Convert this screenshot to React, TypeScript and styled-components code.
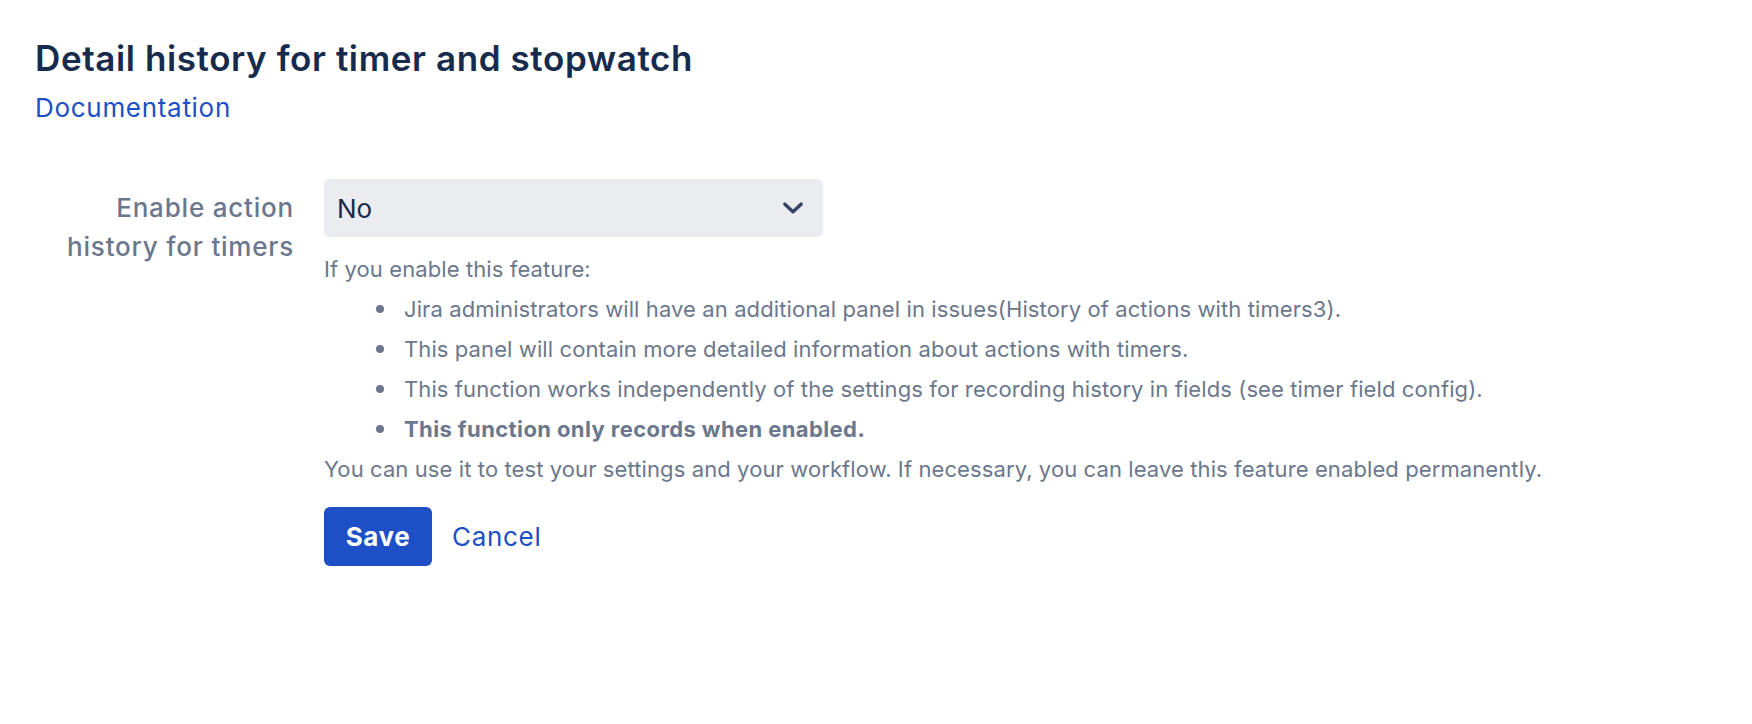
import styled, { createGlobalStyle } from 'styled-components';

const GlobalStyle = createGlobalStyle`
  body {
    margin: 0;
    background: #ffffff;
    font-family: Inter, "Noto Sans", "Liberation Sans", sans-serif;
  }
`;

const helpItems = [
  { text: 'Jira administrators will have an additional panel in issues(History of actions with timers3).' },
  { text: 'This panel will contain more detailed information about actions with timers.' },
  { text: 'This function works independently of the settings for recording history in fields (see timer field config).' },
  { text: 'This function only records when enabled.', bold: true },
];

function ChevronDown() {
  return (
    <svg width="26" height="26" viewBox="0 0 24 24" fill="none">
      <path d="M4.5 8.5 12 15.5l7.5-7" stroke="#344563" strokeWidth="3.2" strokeLinecap="round" strokeLinejoin="round" />
    </svg>
  );
}

export default function App() {
  return (
    <>
      <GlobalStyle />
      <Page>
        <Title>Detail history for timer and stopwatch</Title>
        <DocLink href="#">Documentation</DocLink>

        <Form>
          <Label>
            Enable action
            <br />
            history for timers
          </Label>
          <Field>
            <Select>
              <SelectValue>No</SelectValue>
              <ChevronDown />
            </Select>
            <Help>If you enable this feature:</Help>
            <HelpList>
              {helpItems.map((item) => (
                <HelpItem key={item.text} $bold={item.bold}>
                  <Bullet />
                  {item.text}
                </HelpItem>
              ))}
            </HelpList>
            <Help>
              You can use it to test your settings and your workflow. If necessary, you can leave this feature enabled
              permanently.
            </Help>
            <Actions>
              <SaveButton>Save</SaveButton>
              <CancelLink href="#">Cancel</CancelLink>
            </Actions>
          </Field>
        </Form>
      </Page>
    </>
  );
}

const Page = styled.div`
  padding: 38px 35px;
  color: #172b4d;
`;

const Title = styled.h1`
  margin: 0;
  font-size: 35px;
  line-height: 40px;
  font-weight: 600;
  letter-spacing: 0.6px;
  color: #172b4d;
`;

const DocLink = styled.a`
  display: inline-block;
  margin-top: 15px;
  font-size: 26px;
  line-height: 30px;
  letter-spacing: 0.7px;
  color: #1d4fc6;
  text-decoration: none;
`;

const Form = styled.div`
  display: grid;
  grid-template-columns: 259px 1fr;
  column-gap: 30px;
  margin-top: 56px;
`;

const Label = styled.div`
  padding-top: 9px;
  text-align: right;
  font-size: 26px;
  line-height: 39px;
  letter-spacing: 0.8px;
  font-weight: 500;
  color: #6b778c;
`;

const Field = styled.div`
  display: flex;
  flex-direction: column;
  align-items: flex-start;
`;

const Select = styled.div`
  display: flex;
  align-items: center;
  justify-content: space-between;
  box-sizing: border-box;
  width: 499px;
  height: 58px;
  padding: 0 17px 0 13px;
  background: #ebecf0;
  border-radius: 6px;
`;

const SelectValue = styled.span`
  font-size: 26px;
  color: #172b4d;
`;

const Help = styled.p`
  margin: 0;
  font-size: 22px;
  line-height: 40px;
  letter-spacing: 0.1px;
  color: #6b778c;

  &:first-of-type {
    margin-top: 12px;
  }
`;

const HelpList = styled.ul`
  margin: 0;
  padding: 0 0 0 52px;
  list-style: none;
`;

const HelpItem = styled.li<{ $bold?: boolean }>`
  display: flex;
  align-items: center;
  gap: 20px;
  font-size: 22px;
  line-height: 40px;
  color: #6b778c;
  font-weight: ${(p) => (p.$bold ? 700 : 400)};
  letter-spacing: ${(p) => (p.$bold ? '0.4px' : '0.1px')};
`;

const Bullet = styled.span`
  flex: none;
  width: 8px;
  height: 8px;
  border-radius: 50%;
  background: #6b778c;
`;

const Actions = styled.div`
  display: flex;
  align-items: center;
  gap: 20px;
  margin-top: 18px;
`;

const SaveButton = styled.button`
  width: 108px;
  height: 59px;
  border: 0;
  border-radius: 6px;
  background: #1d4fc6;
  color: #ffffff;
  font-family: inherit;
  font-size: 26px;
  letter-spacing: 0.5px;
  font-weight: 700;
  cursor: pointer;
`;

const CancelLink = styled.a`
  font-size: 26px;
  letter-spacing: 0.7px;
  color: #1d4fc6;
  text-decoration: none;
`;
